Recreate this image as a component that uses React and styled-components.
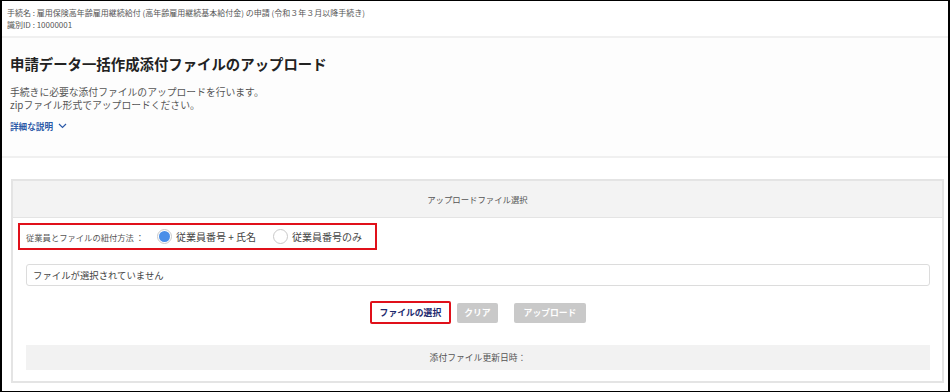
import React from "react";
import styled, { createGlobalStyle } from "styled-components";

const Global = createGlobalStyle`
  html, body { margin: 0; padding: 0; background: #fff; }
  body { font-family: "Noto Sans CJK JP", "Noto Sans", sans-serif; }
  * { box-sizing: border-box; }
`;

const Frame = styled.div`
  width: 950px;
  height: 392px;
  border-style: solid;
  border-color: #000;
  border-width: 1px 2px 1px 2px;
  background: #fff;
  overflow: hidden;
`;

const InfoBar = styled.div`
  padding: 6px 0 5px 5px;
  font-size: 8px;
  line-height: 12px;
  color: #555;
  border-bottom: 2px solid #f0f0f0;
  white-space: nowrap;
`;

const Intro = styled.section`
  padding: 16px 0 24px 8px;
  border-bottom: 2px solid #f0f0f0;
  background: #fdfdfd;
`;

const Title = styled.h1`
  margin: 0;
  font-size: 14.4px;
  line-height: 20px;
  font-weight: 700;
  color: #222;
`;

const Desc = styled.p`
  margin: 12px 0 0;
  font-size: 9.8px;
  line-height: 12.5px;
  color: #555;
`;

const MoreLink = styled.a`
  display: flex;
  align-items: center;
  gap: 5px;
  height: 12px;
  margin-top: 9px;
  font-size: 8.6px;
  line-height: 12px;
  font-weight: 700;
  color: #2c5aa8;
  text-decoration: none;
  svg { display: block; }
`;

const Panel = styled.section`
  margin: 21px 4px 0 9px;
  border: 2px solid #e4e4e4;
`;

const PanelHeader = styled.div`
  height: 37px;
  display: flex;
  align-items: center;
  justify-content: center;
  background: #f3f3f3;
  border-bottom: 1px solid #e4e4e4;
  font-size: 8.4px;
  color: #555;
`;

const PanelBody = styled.div`
  padding: 5px 12px 11px 13px;
  display: flex;
  flex-direction: column;
`;

const Highlight = styled.div`
  align-self: flex-start;
  display: flex;
  align-items: center;
  height: 27px;
  margin-left: -8px;
  padding: 0 13px 0 6px;
  border: 2px solid #e0101a;
`;

const FieldLabel = styled.span`
  font-size: 8.3px;
  color: #555;
  margin-right: 13px;
  white-space: nowrap;
`;

const RadioOption = styled.label`
  display: flex;
  align-items: center;
  gap: 4px;
  font-size: 10px;
  color: #444;
  margin-right: ${(p) => (p.$last ? "0" : "17px")};
  white-space: nowrap;
`;

const RadioDot = styled.span`
  width: 15px;
  height: 15px;
  border-radius: 50%;
  border: 1px solid #c9c9c9;
  background: #fff;
  display: flex;
  align-items: center;
  justify-content: center;
  &::after {
    content: "";
    width: 11px;
    height: 11px;
    border-radius: 50%;
    background: ${(p) => (p.$checked ? "#4a8ee8" : "transparent")};
  }
`;

const FileField = styled.div`
  margin-top: 14px;
  height: 22px;
  border: 1px solid #dcdcdc;
  border-radius: 3px;
  padding: 0 6px;
  display: flex;
  align-items: center;
  font-size: 9.4px;
  color: #444;
`;

const ButtonRow = styled.div`
  margin-top: 15px;
  display: flex;
  justify-content: center;
  align-items: center;
  gap: 6px;
`;

const Button = styled.button`
  height: ${(p) => (p.$primary ? "23px" : "20px")};
  padding: 0 ${(p) => p.$px || "8px"};
  margin-left: ${(p) => p.$ml || 0};
  font-family: inherit;
  font-size: 8.8px;
  font-weight: 700;
  border-radius: 2px;
  border: ${(p) => (p.$primary ? "2px solid #e0101a" : "none")};
  background: ${(p) => (p.$primary ? "#fff" : "#c9c9c9")};
  color: ${(p) => (p.$primary ? "#1d2a6e" : "#fff")};
  cursor: pointer;
`;

const UpdatedBar = styled.div`
  margin-top: 21px;
  height: 25px;
  background: #f2f2f2;
  display: flex;
  align-items: center;
  justify-content: center;
  font-size: 8.8px;
  color: #555;
`;

function Chevron() {
  return (
    <svg width="9" height="6" viewBox="0 0 9 6" fill="none">
      <path d="M1 1l3.5 3.5L8 1" stroke="#2c5aa8" strokeWidth="1.2" />
    </svg>
  );
}

export default function App() {
  return (
    <>
      <Global />
      <Frame>
        <InfoBar>
          <div>手続名 : 雇用保険高年齢雇用継続給付 (高年齢雇用継続基本給付金) の申請 (令和３年３月以降手続き)</div>
          <div>識別ID : 10000001</div>
        </InfoBar>
        <Intro>
          <Title>申請データ一括作成添付ファイルのアップロード</Title>
          <Desc>
            手続きに必要な添付ファイルのアップロードを行います。
            <br />
            zipファイル形式でアップロードください。
          </Desc>
          <MoreLink href="#">
            詳細な説明 <Chevron />
          </MoreLink>
        </Intro>
        <Panel>
          <PanelHeader>アップロードファイル選択</PanelHeader>
          <PanelBody>
            <Highlight>
              <FieldLabel>従業員とファイルの紐付方法 ：</FieldLabel>
              <RadioOption>
                <RadioDot $checked />
                従業員番号 + 氏名
              </RadioOption>
              <RadioOption $last>
                <RadioDot />
                従業員番号のみ
              </RadioOption>
            </Highlight>
            <FileField>ファイルが選択されていません</FileField>
            <ButtonRow>
              <Button $primary $px="8px">ファイルの選択</Button>
              <Button $px="7px">クリア</Button>
              <Button $px="10px" $ml="10px">アップロード</Button>
            </ButtonRow>
            <UpdatedBar>添付ファイル更新日時：</UpdatedBar>
          </PanelBody>
        </Panel>
      </Frame>
    </>
  );
}
